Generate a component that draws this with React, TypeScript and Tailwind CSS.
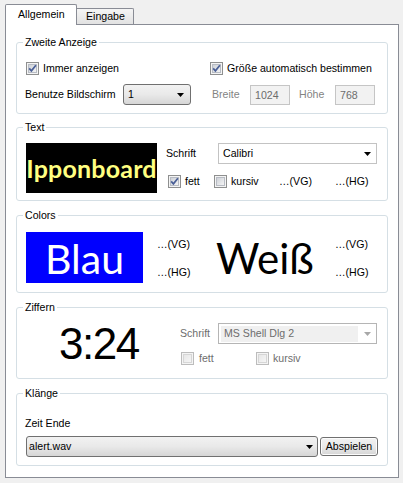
import React from "react";

function Check({ checked = false, disabled = false }: { checked?: boolean; disabled?: boolean }) {
  const outer = disabled ? "#bcbcbc" : "#8e8f8f";
  return (
    <svg width="13" height="13" viewBox="0 0 13 13" className="shrink-0">
      <defs>
        <linearGradient id={disabled ? "cbd" : "cbn"} x1="0" y1="0" x2="1" y2="1">
          <stop offset="0" stopColor={disabled ? "#e6e6e6" : "#cbcfd5"} />
          <stop offset="1" stopColor={disabled ? "#f6f6f6" : "#f7f7f7"} />
        </linearGradient>
      </defs>
      <rect x="0.5" y="0.5" width="12" height="12" fill="#f4f4f4" stroke={outer} />
      <rect x="2.5" y="2.5" width="8" height="8" fill={`url(#${disabled ? "cbd" : "cbn"})`} stroke={disabled ? "#d6d6d6" : "#b8bcc4"} />
      {checked && (
        <path d="M3.2 6.4 L5.4 8.9 L9.9 3.2" fill="none" stroke="#4a5f97" strokeWidth="1.7" />
      )}
    </svg>
  );
}

function Arrow({ color = "#000" }: { color?: string }) {
  return (
    <svg width="7" height="4" viewBox="0 0 7 4" className="shrink-0">
      <polygon points="0,0 7,0 3.5,4" fill={color} />
    </svg>
  );
}

function Group({ title, h, children }: { title: string; h: string; children: React.ReactNode }) {
  return (
    <div className={`relative border border-[#d5dfe5] rounded-[3px] ${h}`}>
      <span className="absolute -top-[7px] left-[6px] bg-white px-[2px] leading-[13px]">{title}</span>
      {children}
    </div>
  );
}

export default function App() {
  return (
    <div className="w-[403px] h-[483px] bg-[#f0f0f0] font-['Liberation_Sans',sans-serif] text-[10.6px] text-black pl-[5px] pt-[4px]">
      {/* tabs */}
      <div className="flex items-end h-[20px]">
        <div className="relative z-10 -mb-px h-[21px] w-[72px] bg-white border border-b-0 border-[#898c95] rounded-t-[2px] flex items-center pl-[12px] pb-[1px]">
          Allgemein
        </div>
        <div className="h-[16px] w-[57px] border border-l-0 border-b-0 border-[#898c95] rounded-tr-[2px] bg-gradient-to-b from-[#f5f5f5] to-[#e2e2e2] flex items-center pl-[9px] pt-[1px]">
          Eingabe
        </div>
      </div>

      {/* pane */}
      <div className="w-[394px] h-[454px] bg-white border border-[#898c95] px-[10px] pt-[17px] flex flex-col">
        {/* Zweite Anzeige */}
        <Group title="Zweite Anzeige" h="h-[72px]">
          <div className="pt-[19px] pl-[9px]">
            <div className="flex items-center h-[13px]">
              <div className="w-[184px] flex items-center gap-[4px]">
                <Check checked />
                <span>Immer anzeigen</span>
              </div>
              <div className="flex items-center gap-[4px]">
                <Check checked />
                <span>Größe automatisch bestimmen</span>
              </div>
            </div>
            <div className="flex items-center h-[21px] mt-[9px] -ml-px">
              <span className="w-[98px]">Benutze Bildschirm</span>
              <div className="w-[68px] h-[21px] border border-[#707070] rounded-[3px] bg-gradient-to-b from-[#f2f2f2] via-[#e9e9e9] to-[#d6d6d6] flex items-center justify-between pl-[4px] pr-[6px]">
                <span>1</span>
                <Arrow />
              </div>
              <span className="ml-[21px] w-[38px] text-[#838383]">Breite</span>
              <div className="w-[40px] h-[20px] border border-[#c5c5c5] bg-[#f2f2f2] text-[#6d6d6d] flex items-center pl-[4px] pt-[3px]">1024</div>
              <span className="ml-[9px] w-[36px] text-[#838383]">Höhe</span>
              <div className="w-[40px] h-[20px] border border-[#c5c5c5] bg-[#f2f2f2] text-[#6d6d6d] flex items-center pl-[4px] pt-[3px]">768</div>
            </div>
          </div>
        </Group>

        {/* Text */}
        <div className="mt-[13px]">
          <Group title="Text" h="h-[74px]">
            <div className="pt-[15px] pl-[9px] flex">
              <div className="w-[131px] h-[50px] bg-black flex items-center justify-center pt-[2px] font-['Lato',sans-serif] font-bold text-[25px] text-[#ffff80] tracking-[0.2px]">
                Ipponboard
              </div>
              <div className="ml-[9px] flex flex-col">
                <div className="flex items-center h-[21px]">
                  <span className="w-[52px]">Schrift</span>
                  <div className="w-[159px] h-[21px] border border-[#c3c3c3] bg-white flex items-center justify-between pl-[4px] pr-[5px]">
                    <span>Calibri</span>
                    <Arrow />
                  </div>
                </div>
                <div className="flex items-center h-[13px] mt-[11px] pl-[2px]">
                  <div className="w-[46px] flex items-center gap-[4px]">
                    <Check checked />
                    <span>fett</span>
                  </div>
                  <div className="w-[65px] flex items-center gap-[4px]">
                    <Check />
                    <span>kursiv</span>
                  </div>
                  <span className="w-[56px]">…(VG)</span>
                  <span>…(HG)</span>
                </div>
              </div>
            </div>
          </Group>
        </div>

        {/* Colors */}
        <div className="mt-[14px]">
          <Group title="Colors" h="h-[78px]">
            <div className="pt-[16px] pl-[9px] flex">
              <div className="w-[117px] h-[51px] bg-[#0000ff] text-white flex items-center justify-center font-['Lato',sans-serif] text-[41px] leading-none pt-[1px]">
                Blau
              </div>
              <div className="ml-[14px] w-[58px] h-[51px] flex flex-col justify-between pt-[6px] pb-[4px] leading-[13px]">
                <span>…(VG)</span>
                <span>…(HG)</span>
              </div>
              <div className="w-[120px] h-[51px] flex items-center pl-[1px] font-['Lato',sans-serif] text-[42px] leading-none">
                Weiß
              </div>
              <div className="h-[51px] flex flex-col justify-between pt-[6px] pb-[4px] leading-[13px]">
                <span>…(VG)</span>
                <span>…(HG)</span>
              </div>
            </div>
          </Group>
        </div>

        {/* Ziffern */}
        <div className="mt-[14px]">
          <Group title="Ziffern" h="h-[72px]">
            <div className="pl-[9px] flex">
              <div className="w-[154px] h-[70px] flex items-center pl-[33px] pt-[2px] text-[44px] tracking-[-1.5px] leading-none">
                3:24
              </div>
              <div className="pt-[15px] flex flex-col">
                <div className="flex items-center h-[21px]">
                  <span className="w-[38px] text-[#6d6d6d]">Schrift</span>
                  <div className="w-[159px] h-[21px] border border-[#b5b5b5] bg-white flex items-center justify-between pl-[2px] pr-[5px]">
                    <span className="w-[137px] h-[16px] bg-[#f0f0f0] text-[#6d6d6d] flex items-center pl-[3px]">MS Shell Dlg 2</span>
                    <Arrow color="#a8a8a8" />
                  </div>
                </div>
                <div className="flex items-center h-[13px] mt-[8px] pl-[1px] text-[#6d6d6d]">
                  <div className="w-[75px] flex items-center gap-[5px]">
                    <Check disabled />
                    <span>fett</span>
                  </div>
                  <div className="flex items-center gap-[4px]">
                    <Check disabled />
                    <span>kursiv</span>
                  </div>
                </div>
              </div>
            </div>
          </Group>
        </div>

        {/* Klänge */}
        <div className="mt-[14px]">
          <Group title="Klänge" h="h-[73px]">
            <div className="pt-[23px] pl-[9px]">
              <div className="leading-[13px] -ml-px">Zeit Ende</div>
              <div className="flex items-center mt-[6px]">
                <div className="w-[292px] h-[21px] border border-[#707070] rounded-[3px] bg-gradient-to-b from-[#f2f2f2] via-[#e9e9e9] to-[#d6d6d6] flex items-center justify-between pl-[2px] pr-[4px]">
                  <span>alert.wav</span>
                  <Arrow />
                </div>
                <div className="ml-[2px] w-[58px] h-[19px] border border-[#707070] rounded-[3px] bg-gradient-to-b from-[#f2f2f2] via-[#e9e9e9] to-[#d6d6d6] flex items-center justify-center shadow-[inset_0_0_0_1px_#fcfcfc]">
                  Abspielen
                </div>
              </div>
            </div>
          </Group>
        </div>
      </div>
    </div>
  );
}
